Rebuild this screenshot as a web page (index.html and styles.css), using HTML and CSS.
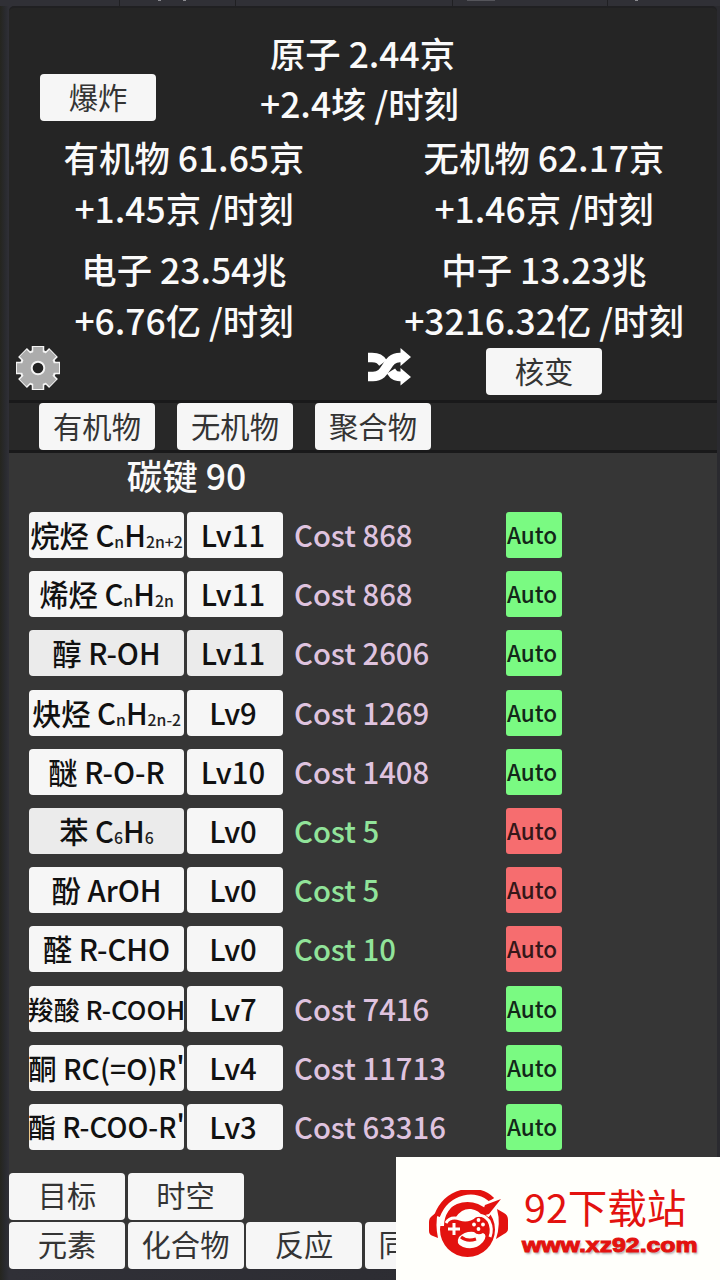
FILE: index.html
```html
<!DOCTYPE html>
<html lang="zh-CN">
<head>
  <meta charset="UTF-8">
  <meta name="viewport" content="width=device-width, initial-scale=1.0">
  <title>原子</title>
  <link rel="stylesheet" href="styles.css">
</head>
<body>
  <div class="top-strip">
    <span></span><span><i></i><i></i></span><span></span><span><i class="wide"></i></span><span><i></i></span>
  </div>

  <div class="game">
    <header class="stats">
      <div class="atom">
        <button class="btn">爆炸</button>
        <div class="stat"><p class="total">原子 2.44京</p><p>+2.4垓 /时刻</p></div>
      </div>
      <div class="stat-grid">
        <div class="stat"><p>有机物 61.65京</p><p>+1.45京 /时刻</p></div>
        <div class="stat"><p>无机物 62.17京</p><p>+1.46京 /时刻</p></div>
        <div class="stat"><p>电子 23.54兆</p><p>+6.76亿 /时刻</p></div>
        <div class="stat"><p>中子 13.23兆</p><p>+3216.32亿 /时刻</p></div>
      </div>
      <div class="tools">
        <svg class="gear" viewBox="0 0 48 48">
          <g class="gear-edge">
            <circle cx="24" cy="24" r="17.500"/>
            <path d="M24 2V46M2 24H46M8.500 8.500L39.500 39.500M39.500 8.500L8.500 39.500"/>
          </g>
          <g class="gear-body">
            <circle cx="24" cy="24" r="16.500"/>
            <path d="M24 3V45M3 24H45M9.200 9.200L38.800 38.800M38.800 9.200L9.200 38.800"/>
          </g>
          <circle class="gear-hole" cx="24" cy="24" r="6.300"/>
        </svg>
        <svg class="shuffle" viewBox="0 0 44 38">
          <path class="lane" d="M0 9.500H4C10 9.500 12 11 15 15M23 23C26 28 28 28.500 35 28.500"/>
          <path class="lane" d="M0 28.500H5C20 28.500 17 9.500 32 9.500H35"/>
          <path class="head" d="M32.500 0L43 9L32.500 18ZM32.500 20L43 29L32.500 37.500Z"/>
        </svg>
        <button class="btn">核变</button>
      </div>
    </header>

    <nav class="tabs">
      <button class="btn">有机物</button>
      <button class="btn">无机物</button>
      <button class="btn">聚合物</button>
    </nav>

    <main class="panel">
      <h2>碳键 90</h2>
      <div class="list">
        <div class="row">
          <button class="name">烷烃 C<sub>n</sub>H<sub>2n+2</sub></button>
          <button class="level">Lv11</button>
          <span class="cost">Cost 868</span>
          <button class="auto on">Auto</button>
        </div>
        <div class="row">
          <button class="name">烯烃 C<sub>n</sub>H<sub>2n</sub></button>
          <button class="level">Lv11</button>
          <span class="cost">Cost 868</span>
          <button class="auto on">Auto</button>
        </div>
        <div class="row">
          <button class="name dim">醇 R-OH</button>
          <button class="level dim">Lv11</button>
          <span class="cost">Cost 2606</span>
          <button class="auto on">Auto</button>
        </div>
        <div class="row">
          <button class="name">炔烃 C<sub>n</sub>H<sub>2n-2</sub></button>
          <button class="level">Lv9</button>
          <span class="cost">Cost 1269</span>
          <button class="auto on">Auto</button>
        </div>
        <div class="row">
          <button class="name">醚 R-O-R</button>
          <button class="level">Lv10</button>
          <span class="cost">Cost 1408</span>
          <button class="auto on">Auto</button>
        </div>
        <div class="row">
          <button class="name dim">苯 C<sub>6</sub>H<sub>6</sub></button>
          <button class="level">Lv0</button>
          <span class="cost ready">Cost 5</span>
          <button class="auto off">Auto</button>
        </div>
        <div class="row">
          <button class="name">酚 ArOH</button>
          <button class="level">Lv0</button>
          <span class="cost ready">Cost 5</span>
          <button class="auto off">Auto</button>
        </div>
        <div class="row">
          <button class="name">醛 R-CHO</button>
          <button class="level">Lv0</button>
          <span class="cost ready">Cost 10</span>
          <button class="auto off">Auto</button>
        </div>
        <div class="row">
          <button class="name small">羧酸 R-COOH</button>
          <button class="level">Lv7</button>
          <span class="cost">Cost 7416</span>
          <button class="auto on">Auto</button>
        </div>
        <div class="row">
          <button class="name medium">酮 RC(=O)R'</button>
          <button class="level">Lv4</button>
          <span class="cost">Cost 11713</span>
          <button class="auto on">Auto</button>
        </div>
        <div class="row">
          <button class="name narrow">酯 R-COO-R'</button>
          <button class="level">Lv3</button>
          <span class="cost">Cost 63316</span>
          <button class="auto on">Auto</button>
        </div>
      </div>
      <div class="bottom-nav">
        <div class="nav-row">
          <button class="btn">目标</button>
          <button class="btn">时空</button>
        </div>
        <div class="nav-row">
          <button class="btn">元素</button>
          <button class="btn">化合物</button>
          <button class="btn">反应</button>
          <button class="btn cut">同</button>
        </div>
      </div>
    </main>
  </div>

  <div class="site-badge">
    <svg class="mascot" viewBox="0 0 80 68">
      <path class="red" d="M9 21L3 26Q0 28 0 32V41Q0 45 4 46L9 48Q6 35 9 21ZM68 19L75 23Q79 25 79 30V39Q79 42 75 44L67 49Q72 34 68 19Z"/>
      <path class="band" d="M8 26C18 0 48 -5 63 10"/>
      <circle class="red" cx="38.500" cy="39.500" r="27.500"/>
      <path class="gap" d="M13 36C13 11 41 0 58 14"/>
      <path class="gap" d="M60 13L73 7L58 26"/>
      <path class="red" d="M56 15L72 9L60 24L52 26Z"/>
      <path class="white" d="M27 27Q33 18 42 19Q50 20 54 27L45 26Q38 32 27 27Z"/>
      <path class="pad" d="M17 33Q21 26 31 29Q39 32 46 26Q54 23 60 31Q64 39 61 47"/>
      <path class="white" d="M30 47Q36 41 45 42Q49 46 54 43Q59 45 54 52Q46 61 34 57Q26 54 30 47Z"/>
      <path class="smile" d="M32 47Q38 52 47 49"/>
      <path class="cross" d="M19 39H31M25 33V45"/>
      <g class="white"><circle cx="49.500" cy="30" r="1.900"/><circle cx="45" cy="34.500" r="1.900"/><circle cx="54" cy="34.500" r="1.900"/><circle cx="49.500" cy="39" r="1.900"/></g>
    </svg>
    <div class="site-text">
      <strong>92下载站</strong>
      <span>www.xz92.com</span>
    </div>
  </div>
</body>
</html>
```
FILE: styles.css
```css
:root {
  --dark: #252525;
  --panel: #363636;
  --white: #f6f6f6;
  --cost: #dfc3df;
  --green: #7afa82;
  --red: #f66d6f;
  --brand: #e3120f;
}

* {
  margin: 0;
  padding: 0;
  box-sizing: border-box;
}

body {
  width: 720px;
  height: 1280px;
  overflow: hidden;
  position: relative;
  background: linear-gradient(90deg, #25251f 0, #292a2e 5px, #303037 9px, #2a2a2f 100%);
  font-family: "Noto Sans CJK SC", sans-serif;
  font-weight: 500;
  color: #fafafa;
}

button {
  border: none;
  font-family: inherit;
  font-weight: inherit;
  white-space: nowrap;
}

.top-strip {
  height: 6px;
  display: grid;
  grid-template-columns: 120px 116px 217px 155px 1fr;
  background: #303036;
}

.top-strip span {
  display: flex;
  gap: 22px;
  padding-left: 38px;
  border-right: 1px solid #202023;
}

.top-strip span:nth-child(4) {
  padding-left: 14px;
}

.top-strip span:nth-child(5) {
  padding-left: 27px;
  border: none;
}

.top-strip i {
  width: 3px;
  height: 1px;
  background: #8b8b90;
}

.top-strip .wide {
  width: 28px;
  background: #55555b;
}

.game {
  margin: 0 3px 0 9px;
  height: 1263px;
  display: flex;
  flex-direction: column;
}

.stats {
  height: 394px;
  padding-top: 20px;
  background: var(--dark);
  border-top: 2px solid #202022;
  border-radius: 5px 5px 0 0;
}

.stat {
  font-size: 35.4px;
  line-height: 51px;
  text-align: center;
  white-space: nowrap;
}

.atom {
  display: grid;
  grid-template-columns: 1fr auto 1fr;
  margin: 0 7px 0 0;
}

.atom .stat {
  line-height: 50px;
}

.atom .total {
  padding-left: 6px;
}

.atom .btn {
  margin: 46px 0 0 31px;
}

.stat-grid {
  display: grid;
  grid-template-columns: 360px 360px;
  row-gap: 10px;
  margin: 3px -3px 0 -5px;
}

.btn {
  width: 116px;
  height: 47px;
  flex: none;
  border-radius: 4px;
  background: var(--white);
  color: #343434;
  font-size: 29.3px;
  font-weight: 400;
  line-height: 43px;
  padding-bottom: 3px;
}

.tools {
  display: flex;
  align-items: flex-start;
  margin-top: 3px;
}

.gear {
  width: 48px;
  height: 48px;
  margin: -4px 0 0 5px;
}

.gear path {
  fill: none;
}

.gear-edge {
  fill: #f3f3f3;
  stroke: #f3f3f3;
  stroke-width: 12.5px;
}

.gear-edge circle {
  stroke-width: 2;
}

.gear-body {
  fill: #acacac;
  stroke: #acacac;
  stroke-width: 9.5px;
}

.gear-body circle {
  stroke: none;
}

.gear-hole {
  fill: #222;
  stroke: #f3f3f3;
  stroke-width: 2;
}

.shuffle {
  width: 44px;
  height: 38px;
  margin: 0 74px 0 306px;
}

.shuffle .lane {
  fill: none;
  stroke: #fff;
  stroke-width: 9.5px;
}

.shuffle .head {
  fill: #fff;
}

.tabs {
  height: 53px;
  display: flex;
  gap: 22px;
  padding-left: 30px;
  background: #282828;
  border-top: 3px solid #19191a;
  border-bottom: 3px solid #19191a;
}

.tabs .btn {
  height: 47px;
}

.panel {
  flex: 1;
  background: var(--panel);
}

.panel h2 {
  width: 355px;
  height: 59px;
  font-size: 35.5px;
  font-weight: 500;
  line-height: 43px;
  text-align: center;
}

.list {
  display: grid;
  grid-auto-rows: 59.2px;
  padding-left: 20px;
}

.row {
  display: grid;
  grid-template-columns: 155px 96px 217px 56px;
  column-gap: 3px;
  height: 46px;
  line-height: 46px;
}

.name,
.level {
  display: flex;
  justify-content: center;
  height: 46px;
  border-radius: 4px;
  background: var(--white);
  color: #111;
  font-size: 29.3px;
  line-height: 45px;
  overflow: hidden;
  white-space: pre;
}

.level {
  padding-right: 4px;
}

.dim {
  background: #ebebeb;
}

.name sub {
  font-size: 15.8px;
  vertical-align: baseline;
  padding-top: 7px;
  color: #222;
}

.small {
  font-size: 26px;
}

.medium {
  font-size: 28.4px;
}

.narrow {
  font-size: 27.8px;
}

.cost {
  padding-left: 8px;
  color: var(--cost);
  font-size: 29.3px;
  line-height: 45px;
}

.cost.ready {
  color: #91e49a;
}

.auto {
  height: 46px;
  border-radius: 3px;
  padding-right: 4px;
  color: #132719;
  font-size: 22.5px;
  line-height: 45px;
  display: flex;
  justify-content: center;
}

.auto.on {
  background: var(--green);
}

.auto.off {
  background: var(--red);
  color: #351719;
}

.bottom-nav {
  display: grid;
  gap: 2px;
  margin-top: 9.5px;
}

.nav-row {
  display: flex;
  gap: 2.5px;
}

.cut {
  padding-left: 14px;
  text-align: left;
}

.site-badge {
  position: absolute;
  left: 396px;
  top: 1157px;
  width: 324px;
  height: 123px;
  padding: 33px 0 0 33px;
  display: flex;
  background: #fffffb;
  color: var(--brand);
}

.mascot {
  width: 80px;
  height: 68px;
}

.red {
  fill: var(--brand);
}

.mascot .white {
  fill: #fffffb;
}

.band,
.gap,
.pad,
.smile,
.cross {
  fill: none;
  stroke: #fffffb;
}

.mascot .band {
  stroke: var(--brand);
  stroke-width: 6;
}

.mascot .gap {
  stroke-width: 4;
}

.mascot .pad {
  stroke-width: 3;
}

.mascot .smile {
  stroke: var(--brand);
  stroke-width: 3;
}

.mascot .cross {
  stroke-width: 3;
}

.site-text {
  margin: -10px 0 0 13px;
  white-space: nowrap;
}

.site-text strong {
  display: block;
  padding-left: 2px;
  font-size: 39.5px;
  font-weight: 400;
  line-height: 52px;
}

.site-text span {
  display: block;
  margin-top: 3px;
  font-family: "Liberation Sans", sans-serif;
  font-size: 20.5px;
  font-weight: 700;
  line-height: 20px;
  transform: scaleX(1.21);
  transform-origin: left;
  -webkit-text-stroke: 1px var(--brand);
  text-shadow: 1px 2px 2px #aaa;
}
```
